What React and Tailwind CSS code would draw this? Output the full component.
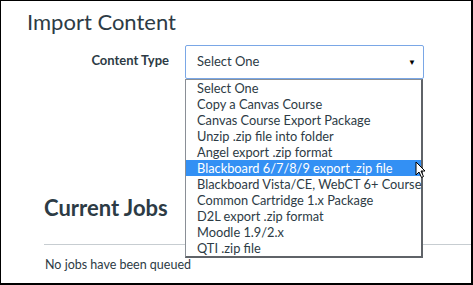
const options = [
  'Select One',
  'Copy a Canvas Course',
  'Canvas Course Export Package',
  'Unzip .zip file into folder',
  'Angel export .zip format',
  'Blackboard 6/7/8/9 export .zip file',
  'Blackboard Vista/CE, WebCT 6+ Course',
  'Common Cartridge 1.x Package',
  'D2L export .zip format',
  'Moodle 1.9/2.x',
  'QTI .zip file',
];

// Mauspekare över det markerade alternativet
function Cursor() {
  return (
    <svg width="12" height="18" viewBox="0 0 12 18" className="absolute left-[229px] top-[1px]">
      <path d="M1 1 L1 14 L4 11 L6.5 16.5 L8.5 15.5 L6 10 L10 10 Z" fill="#fff" stroke="#000" strokeWidth="1" />
    </svg>
  );
}

export default function App() {
  return (
    <div
      className="relative w-[473px] h-[285px] bg-white border-t border-l border-r-2 border-b-2 border-black overflow-hidden text-[#2d3b45]"
      style={{ fontFamily: 'Lato, "Open Sans", sans-serif' }}
    >
      <h1 className="pl-[26px] pt-[6px] text-[22px] leading-[30px] font-normal">Import Content</h1>

      <div className="flex items-start mt-[8px]">
        <div className="w-[168px] text-right text-[13px] font-bold pt-[6px]">Content Type</div>
        <div className="relative ml-[16px] w-[239px]">
          <div className="h-[34px] border border-[#7aa7e6] rounded-[2px] flex items-center justify-between pl-[11px] pr-[7px] text-[13px]">
            <span>Select One</span>
            <span className="text-[8px] text-black">▼</span>
          </div>

          {/* Öppen lista ligger över resten av sidan */}
          <div className="absolute left-0 top-[34px] w-[238px] bg-white border border-[#8a8f96] border-r-2 border-b-2 border-r-[#5f6368] border-b-[#5f6368] z-10">
            {options.map((opt, i) => (
              <div
                key={opt}
                className={`relative h-[16px] leading-[16px] pl-[11px] text-[12.8px] whitespace-nowrap ${
                  i === 5 ? 'bg-[#3390f4] text-white' : 'text-[#2d3b45]'
                }`}
              >
                {opt}
                {i === 5 && <Cursor />}
              </div>
            ))}
          </div>
        </div>
      </div>

      <h2 className="pl-[43px] mt-[114px] text-[22px] leading-[30px] font-bold">Current Jobs</h2>
      <div className="ml-[43px] mt-[21px] border-t border-[#c7cdd1]" />
      <p className="pl-[44px] mt-[11px] text-[12.5px]">No jobs have been queued</p>
    </div>
  );
}
